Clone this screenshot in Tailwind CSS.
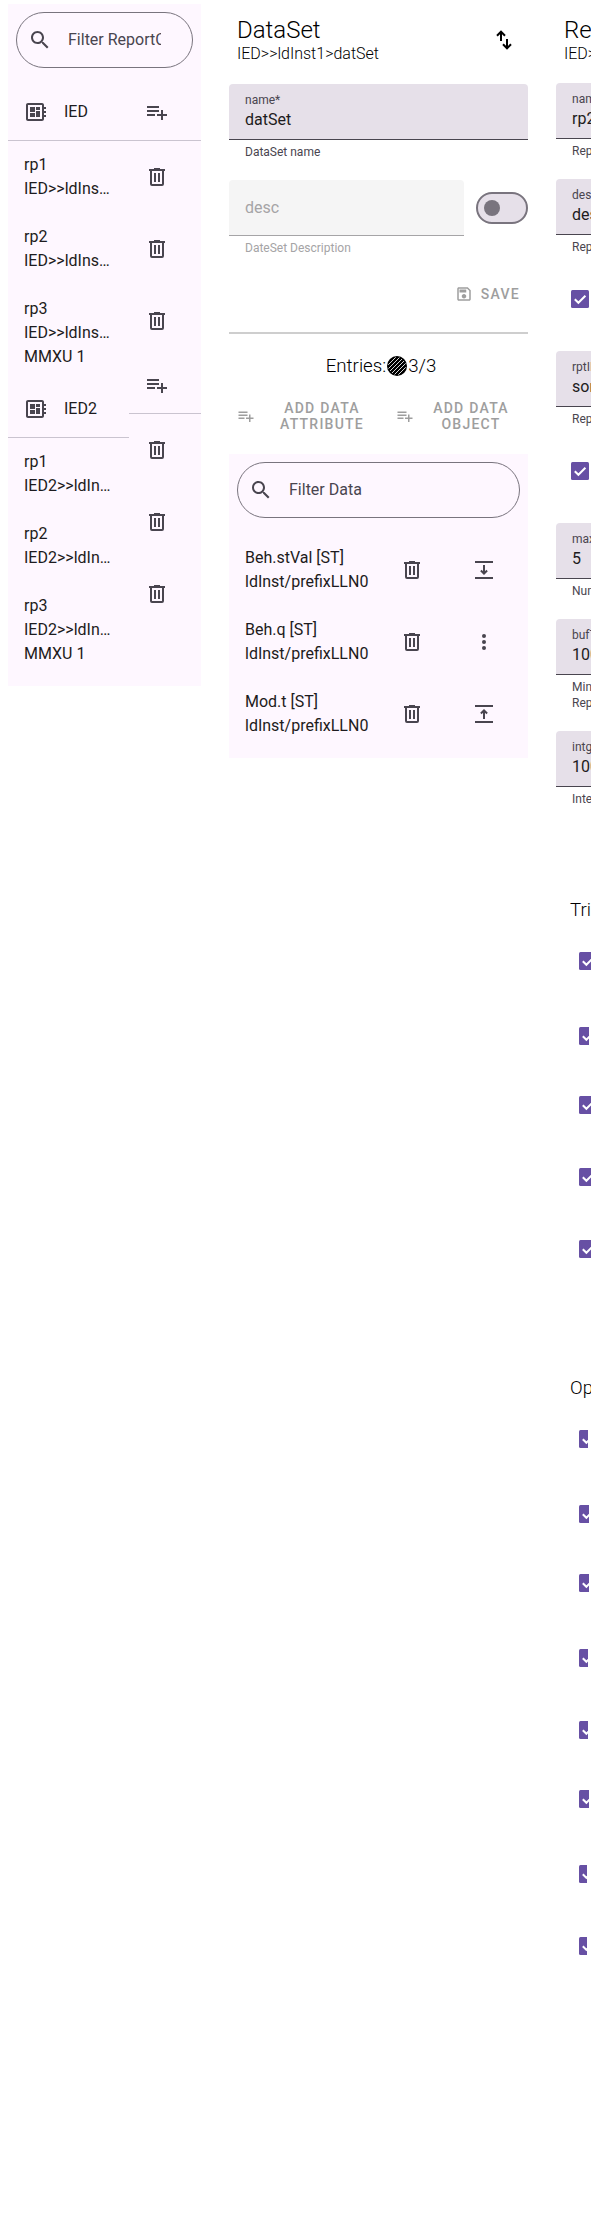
<!DOCTYPE html>
<html lang="en">
<head>
<meta charset="utf-8">
<title>Report Control Editor</title>
<script src="https://cdn.jsdelivr.net/npm/@tailwindcss/browser@4"></script>
</head>
<body class="bg-white font-[Roboto,sans-serif] text-base text-[#1d1b20] overflow-hidden">
<svg class="hidden">
  <symbol id="search" viewBox="0 0 24 24"><path d="M15.5 14h-.79l-.28-.27C15.41 12.59 16 11.11 16 9.5 16 5.91 13.09 3 9.5 3S3 5.91 3 9.5 5.91 16 9.5 16c1.61 0 3.09-.59 4.23-1.57l.27.28v.79l5 4.99L20.49 19l-4.99-5zm-6 0C7.01 14 5 11.99 5 9.5S7.01 5 9.5 5 14 7.01 14 9.5 11.99 14 9.5 14z"/></symbol>
  <symbol id="add" viewBox="0 0 24 24"><path d="M14 10H2v2h12v-2zm0-4H2v2h12V6zm4 8v-4h-2v4h-4v2h4v4h2v-4h4v-2h-4zM2 16h8v-2H2v2z"/></symbol>
  <symbol id="del" viewBox="0 0 24 24"><path fill-rule="evenodd" d="M7 21a2 2 0 0 1-2-2V6H4V4h5V3h6v1h5v2h-1v13a2 2 0 0 1-2 2H7ZM17 6H7v13h10V6ZM9 17h2V8H9v9Zm4 0h2V8h-2v9Z"/></symbol>
  <symbol id="board" viewBox="0 0 24 24"><path d="M22 9V7h-2V5c0-1.1-.9-2-2-2H4c-1.1 0-2 .9-2 2v14c0 1.1.9 2 2 2h14c1.1 0 2-.9 2-2v-2h2v-2h-2v-2h2v-2h-2V9h2zm-4 10H4V5h14v14zM6 13h5v4H6zm6-6h4v3h-4zM6 7h5v5H6zm6 4h4v6h-4z"/></symbol>
  <symbol id="save" viewBox="0 0 24 24"><path d="M17 3H5c-1.11 0-2 .9-2 2v14c0 1.1.89 2 2 2h14c1.1 0 2-.9 2-2V7l-4-4zm2 16H5V5h11.17L19 7.83V19zm-7-7c-1.66 0-3 1.34-3 3s1.34 3 3 3 3-1.34 3-3-1.34-3-3-3zM6 6h9v4H6z"/></symbol>
  <symbol id="swap" viewBox="0 0 24 24"><path fill="none" stroke="currentColor" stroke-width="2" d="M9 13V3.7M5 7.7l4-4 4 4M15 11v9.3M11 16.3l4 4 4-4"/></symbol>
  <symbol id="down" viewBox="0 0 24 24"><path d="M3 3h18v2H3zM3 19h18v2H3z"/><path fill="none" stroke="currentColor" stroke-width="2" d="M12 7v8.6M8.9 12.5l3.1 3.1 3.1-3.1"/></symbol>
  <symbol id="up" viewBox="0 0 24 24"><path d="M3 3h18v2H3zM3 19h18v2H3z"/><path fill="none" stroke="currentColor" stroke-width="2" d="M12 17V8.4M8.9 11.5l3.1-3.1 3.1 3.1"/></symbol>
  <symbol id="more" viewBox="0 0 24 24"><circle cx="12" cy="6" r="2"/><circle cx="12" cy="12" r="2"/><circle cx="12" cy="18" r="2"/></symbol>
  <symbol id="box" viewBox="0 0 18 18"><rect width="18" height="18" rx="1.5" fill="#6750a4"/><path d="M3.8 9.2l3.6 3.6 7-7" fill="none" stroke="#fff" stroke-width="2"/></symbol>
</svg>

<main class="flex h-[2216px] w-[599px] items-start">
  <!-- Report control list -->
  <section class="mt-1 ml-2 h-[682px] w-[193px] shrink-0 bg-[#fef7ff] px-0 pt-2">
    <div class="mx-2 flex h-14 items-center rounded-full border border-[#79747e] pl-[11px] text-[#49454f]">
      <svg class="size-6 shrink-0 fill-current"><use href="#search"/></svg>
      <div class="ml-4 w-[93px] overflow-hidden whitespace-nowrap">Filter ReportControl</div>
    </div>
    <div class="mt-4 flex items-start">
      <div class="w-[121px] leading-6">
        <div class="flex h-[57px] items-center gap-4 border-b border-[#cac4d0] px-4"><svg class="size-6 fill-[#49454f]"><use href="#board"/></svg>IED</div>
        <div class="px-4 py-3"><div>rp1</div><div class="truncate">IED&gt;&gt;ldInst1&gt;rp1</div></div>
        <div class="px-4 py-3"><div>rp2</div><div class="truncate">IED&gt;&gt;ldInst1&gt;rp2</div></div>
        <div class="px-4 py-3"><div>rp3</div><div class="truncate">IED&gt;&gt;ldInst2&gt;rp3</div><div>MMXU 1</div></div>
        <div class="flex h-[57px] items-center gap-4 border-b border-[#cac4d0] px-4"><svg class="size-6 fill-[#49454f]"><use href="#board"/></svg>IED2</div>
        <div class="px-4 py-3"><div>rp1</div><div class="truncate">IED2&gt;&gt;ldInst1&gt;rp1</div></div>
        <div class="px-4 py-3"><div>rp2</div><div class="truncate">IED2&gt;&gt;ldInst1&gt;rp2</div></div>
        <div class="px-4 py-3"><div>rp3</div><div class="truncate">IED2&gt;&gt;ldInst2&gt;rp3</div><div>MMXU 1</div></div>
      </div>
      <div class="w-[72px] fill-[#49454f]">
        <div class="flex h-[57px] items-center border-b border-[#cac4d0] px-4"><svg class="size-6"><use href="#add"/></svg></div>
        <div class="flex h-18 items-center px-4"><svg class="size-6"><use href="#del"/></svg></div>
        <div class="flex h-18 items-center px-4"><svg class="size-6"><use href="#del"/></svg></div>
        <div class="flex h-18 items-center px-4"><svg class="size-6"><use href="#del"/></svg></div>
        <div class="flex h-[57px] items-center border-b border-[#cac4d0] px-4"><svg class="size-6"><use href="#add"/></svg></div>
        <div class="flex h-18 items-center px-4"><svg class="size-6"><use href="#del"/></svg></div>
        <div class="flex h-18 items-center px-4"><svg class="size-6"><use href="#del"/></svg></div>
        <div class="flex h-18 items-center px-4"><svg class="size-6"><use href="#del"/></svg></div>
      </div>
    </div>
  </section>

  <!-- Data set -->
  <section class="ml-7 w-[299px] shrink-0">
    <header class="flex h-[84px] items-start justify-between pr-3 pl-2 font-light text-black">
      <div class="pt-4"><h2 class="text-2xl leading-7">DataSet</h2><p class="leading-[19px]">IED&gt;&gt;ldInst1&gt;datSet</p></div>
      <svg class="mt-7 size-6"><use href="#swap"/></svg>
    </header>
    <div class="h-14 rounded-t border-b border-[#49454f] bg-[#e6e0e9] px-4 pt-2">
      <div class="text-xs leading-4 text-[#49454f]">name*</div><div class="leading-6">datSet</div>
    </div>
    <div class="px-4 pt-1 text-xs leading-4 text-[#49454f]">DataSet name</div>
    <div class="mt-5 flex items-start gap-3">
      <div class="w-[235px]">
        <div class="flex h-14 items-center rounded-t border-b border-[#a5a4a6] bg-[#f5f5f5] px-4 text-[#a5a4a6]">desc</div>
        <div class="px-4 pt-1 text-xs leading-4 text-[#a5a4a6]">DateSet Description</div>
      </div>
      <div class="mt-3 flex h-8 w-[52px] items-center rounded-full border-2 border-[#79747e] bg-[#e6e0e9] pl-1.5"><div class="size-4 rounded-full bg-[#79747e]"></div></div>
    </div>
    <div class="mt-5 flex h-9 items-center justify-end gap-2 pr-2 text-sm font-medium tracking-[1.25px] text-[#9e9e9e]"><svg class="size-[18px] fill-current"><use href="#save"/></svg>SAVE</div>
    <div class="mt-5 h-0.5 bg-[#cecece]"></div>
    <div class="mt-5 flex h-6 items-center justify-center pl-[5px] text-[18.72px] leading-6 font-light text-black">
      <span>Entries:</span>
      <svg class="mx-px size-5" viewBox="0 0 20 20"><defs><clipPath id="disc"><circle cx="10" cy="10" r="9"/></clipPath></defs><circle cx="10" cy="10" r="10"/><path clip-path="url(#disc)" d="M-1 11 11-1M0 14 14 0M1 17 17 1M3 19 19 3M6 20 20 6M9 21 21 9" stroke="#fff" stroke-width=".85"/></svg>
      <span>3/3</span>
    </div>
    <div class="mt-5 flex h-9 text-center text-sm leading-4 font-medium tracking-[1.25px] text-[#9e9e9e]">
      <div class="flex w-[159px] items-center pl-2"><svg class="size-[18px] shrink-0 fill-current"><use href="#add"/></svg><span class="ml-[22px] w-[90px]">ADD DATA ATTRIBUTE</span></div>
      <div class="flex w-[140px] items-center pl-2"><svg class="size-[18px] shrink-0 fill-current"><use href="#add"/></svg><span class="ml-[17px] w-[80px]">ADD DATA OBJECT</span></div>
    </div>
    <div class="mt-5 h-[304px] bg-[#fef7ff] pt-2">
      <div class="mx-2 flex h-14 items-center rounded-full border border-[#79747e] pl-[11px] text-[#49454f]">
        <svg class="size-6 shrink-0 fill-current"><use href="#search"/></svg><div class="ml-4">Filter Data</div>
      </div>
      <div class="mt-4 fill-[#49454f] leading-6">
        <div class="flex h-18 items-center pl-4"><div class="w-[155px]">Beh.stVal [ST]<br>ldInst/prefixLLN0</div><svg class="size-6"><use href="#del"/></svg><svg class="ml-12 size-6 text-[#49454f]"><use href="#down"/></svg></div>
        <div class="flex h-18 items-center pl-4"><div class="w-[155px]">Beh.q [ST]<br>ldInst/prefixLLN0</div><svg class="size-6"><use href="#del"/></svg><svg class="ml-12 size-6"><use href="#more"/></svg></div>
        <div class="flex h-18 items-center pl-4"><div class="w-[155px]">Mod.t [ST]<br>ldInst/prefixLLN0</div><svg class="size-6"><use href="#del"/></svg><svg class="ml-12 size-6 text-[#49454f]"><use href="#up"/></svg></div>
      </div>
    </div>
  </section>

  <!-- Report control attributes, cut off by the scroll container -->
  <section class="ml-7 h-[2216px] w-[35px] shrink-0 overflow-hidden whitespace-nowrap">
    <header class="h-[83px] pt-4 pl-2 font-light text-black"><h2 class="text-2xl leading-7">ReportControl</h2><p class="leading-[19px]">IED&gt;&gt;ldInst1&gt;rp2</p></header>
    <div class="h-24 text-xs leading-4 text-[#49454f]">
      <div class="h-14 rounded-tl border-b border-[#49454f] bg-[#e6e0e9] pt-2 pl-4"><div>name*</div><div class="text-base leading-6 text-[#1d1b20]">rp2</div></div>
      <div class="pt-1 pl-4">Report name</div>
    </div>
    <div class="h-[111px] text-xs leading-4 text-[#49454f]">
      <div class="h-14 rounded-tl border-b border-[#49454f] bg-[#e6e0e9] pt-2 pl-4"><div>desc</div><div class="text-base leading-6 text-[#1d1b20]">desc</div></div>
      <div class="pt-1 pl-4">Report Description</div>
    </div>
    <div class="h-[61px] pl-[15px]"><svg class="size-[18px]"><use href="#box"/></svg></div>
    <div class="h-[111px] text-xs leading-4 text-[#49454f]">
      <div class="h-14 rounded-tl border-b border-[#49454f] bg-[#e6e0e9] pt-2 pl-4"><div>rptID</div><div class="text-base leading-6 text-[#1d1b20]">someRptID</div></div>
      <div class="pt-1 pl-4">Report ID</div>
    </div>
    <div class="h-[61px] pl-[15px]"><svg class="size-[18px]"><use href="#box"/></svg></div>
    <div class="h-24 text-xs leading-4 text-[#49454f]">
      <div class="h-14 rounded-tl border-b border-[#49454f] bg-[#e6e0e9] pt-2 pl-4"><div>max Clients</div><div class="text-base leading-6 text-[#1d1b20]">5</div></div>
      <div class="pt-1 pl-4">Number of clients</div>
    </div>
    <div class="h-28 text-xs leading-4 text-[#49454f]">
      <div class="h-14 rounded-tl border-b border-[#49454f] bg-[#e6e0e9] pt-2 pl-4"><div>bufTime</div><div class="text-base leading-6 text-[#1d1b20]">100</div></div>
      <div class="pt-1 pl-4">Min. Interval<br>Reports</div>
    </div>
    <div class="h-[167px] text-xs leading-4 text-[#49454f]">
      <div class="h-14 rounded-tl border-b border-[#49454f] bg-[#e6e0e9] pt-2 pl-4"><div>intgPd</div><div class="text-base leading-6 text-[#1d1b20]">100</div></div>
      <div class="pt-1 pl-4">Integrity period</div>
    </div>
    <h3 class="h-[54px] pl-3.5 text-[18.72px] leading-6 font-light text-black">Trigger Options</h3>
    <div class="h-[424px] pl-[23px]">
      <div class="h-[75px] w-3 overflow-hidden"><svg class="size-[18px]"><use href="#box"/></svg></div>
      <div class="h-[69px] w-2.5 overflow-hidden"><svg class="size-[18px]"><use href="#box"/></svg></div>
      <div class="h-18 w-3 overflow-hidden"><svg class="size-[18px]"><use href="#box"/></svg></div>
      <div class="h-18 w-3 overflow-hidden"><svg class="size-[18px]"><use href="#box"/></svg></div>
      <div class="h-18 w-3 overflow-hidden"><svg class="size-[18px]"><use href="#box"/></svg></div>
    </div>
    <h3 class="h-[54px] pl-3.5 text-[18.72px] leading-6 font-light text-black">Optional Fields</h3>
    <div class="pl-[23px]">
      <div class="h-[75px] w-[9px] overflow-hidden"><svg class="size-[18px]"><use href="#box"/></svg></div>
      <div class="h-[69px] w-2.5 overflow-hidden"><svg class="size-[18px]"><use href="#box"/></svg></div>
      <div class="h-[75px] w-2.5 overflow-hidden"><svg class="size-[18px]"><use href="#box"/></svg></div>
      <div class="h-18 w-[9px] overflow-hidden"><svg class="size-[18px]"><use href="#box"/></svg></div>
      <div class="h-[69px] w-[9px] overflow-hidden"><svg class="size-[18px]"><use href="#box"/></svg></div>
      <div class="h-[75px] w-2.5 overflow-hidden"><svg class="size-[18px]"><use href="#box"/></svg></div>
      <div class="h-18 w-2 overflow-hidden"><svg class="size-[18px]"><use href="#box"/></svg></div>
      <div class="h-18 w-2 overflow-hidden"><svg class="size-[18px]"><use href="#box"/></svg></div>
    </div>
  </section>
</main>
</body>
</html>
